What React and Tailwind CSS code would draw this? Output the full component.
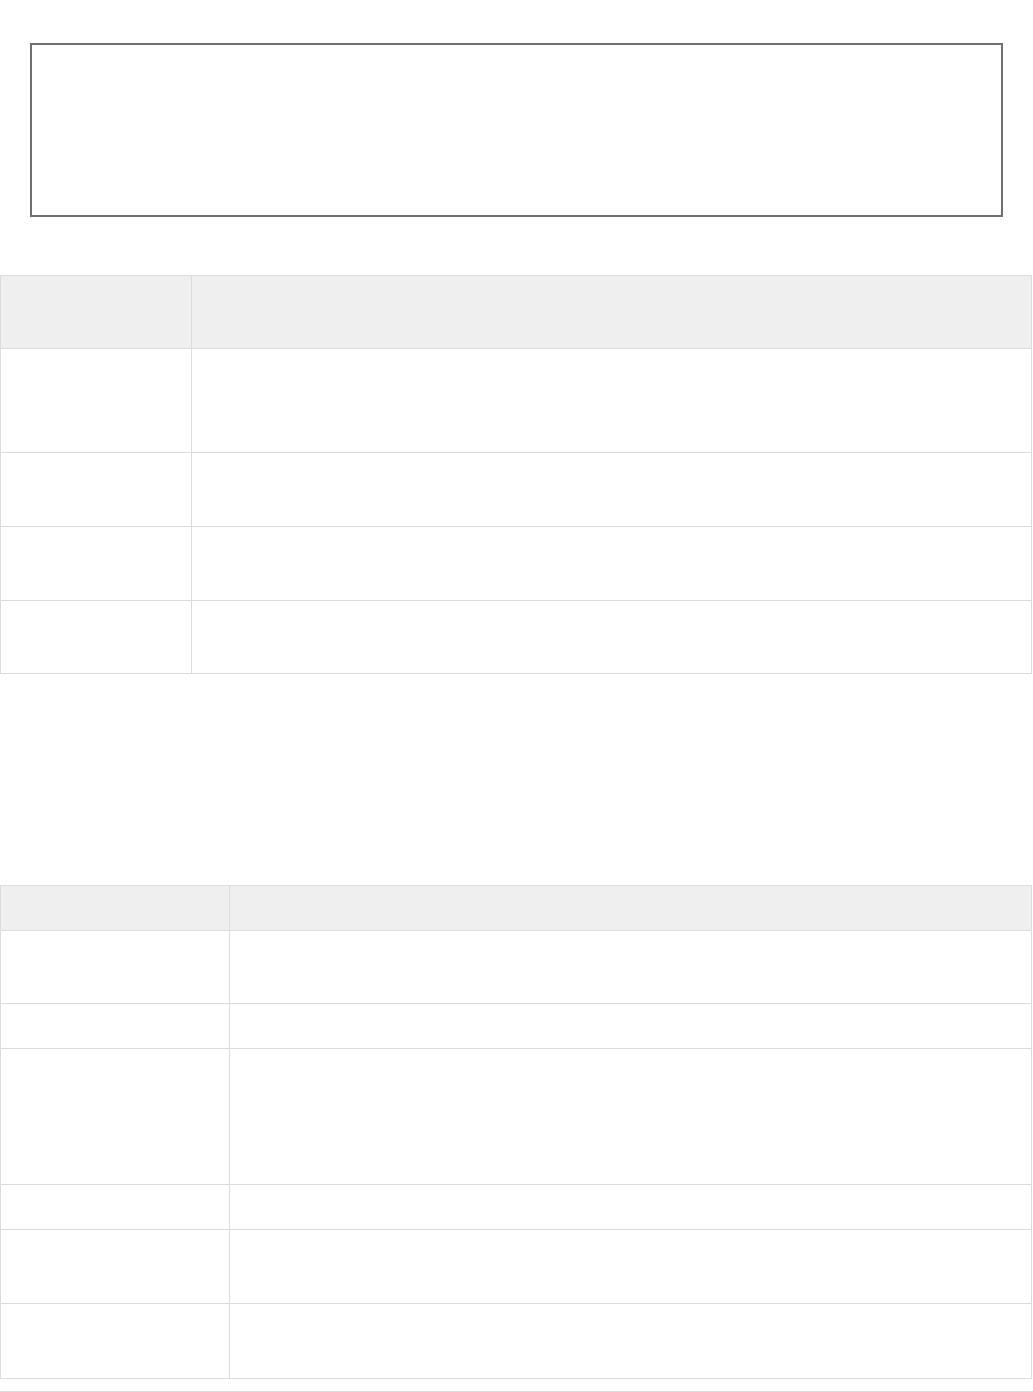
export default function App() {
  const t1 = [104, 74, 74, 73];
  const t2 = [73, 45, 136, 45, 74, 75];
  return (
    <div className="w-[1033px] h-[1392px] bg-white font-['Liberation_Sans',sans-serif] overflow-hidden">
      <div className="pt-[43px] pl-[30px]">
        <div className="w-[973px] h-[174px] border-2 border-[#707070]" />
      </div>
      <div className="mt-[58px] w-[1032px]">
        <div className="grid grid-cols-[191px_1fr] border border-[#dcdcdc] bg-[#efefef] h-[74px]">
          <div className="border-r border-[#dcdcdc]" />
          <div />
        </div>
        {t1.map((h, i) => (
          <div
            key={i}
            className="grid grid-cols-[191px_1fr] border-x border-b border-[#dcdcdc]"
            style={{ height: h }}
          >
            <div className="border-r border-[#dcdcdc]" />
            <div />
          </div>
        ))}
      </div>
      <div className="mt-[211px] w-[1032px]">
        <div className="grid grid-cols-[229px_1fr] border border-[#dcdcdc] bg-[#efefef] h-[46px]">
          <div className="border-r border-[#dcdcdc]" />
          <div />
        </div>
        {t2.map((h, i) => (
          <div
            key={i}
            className="grid grid-cols-[229px_1fr] border-x border-b border-[#dcdcdc]"
            style={{ height: h }}
          >
            <div className="border-r border-[#dcdcdc]" />
            <div />
          </div>
        ))}
      </div>
      <div className="mt-[12px] w-[1033px] border-t border-[#dcdcdc]" />
    </div>
  );
}
